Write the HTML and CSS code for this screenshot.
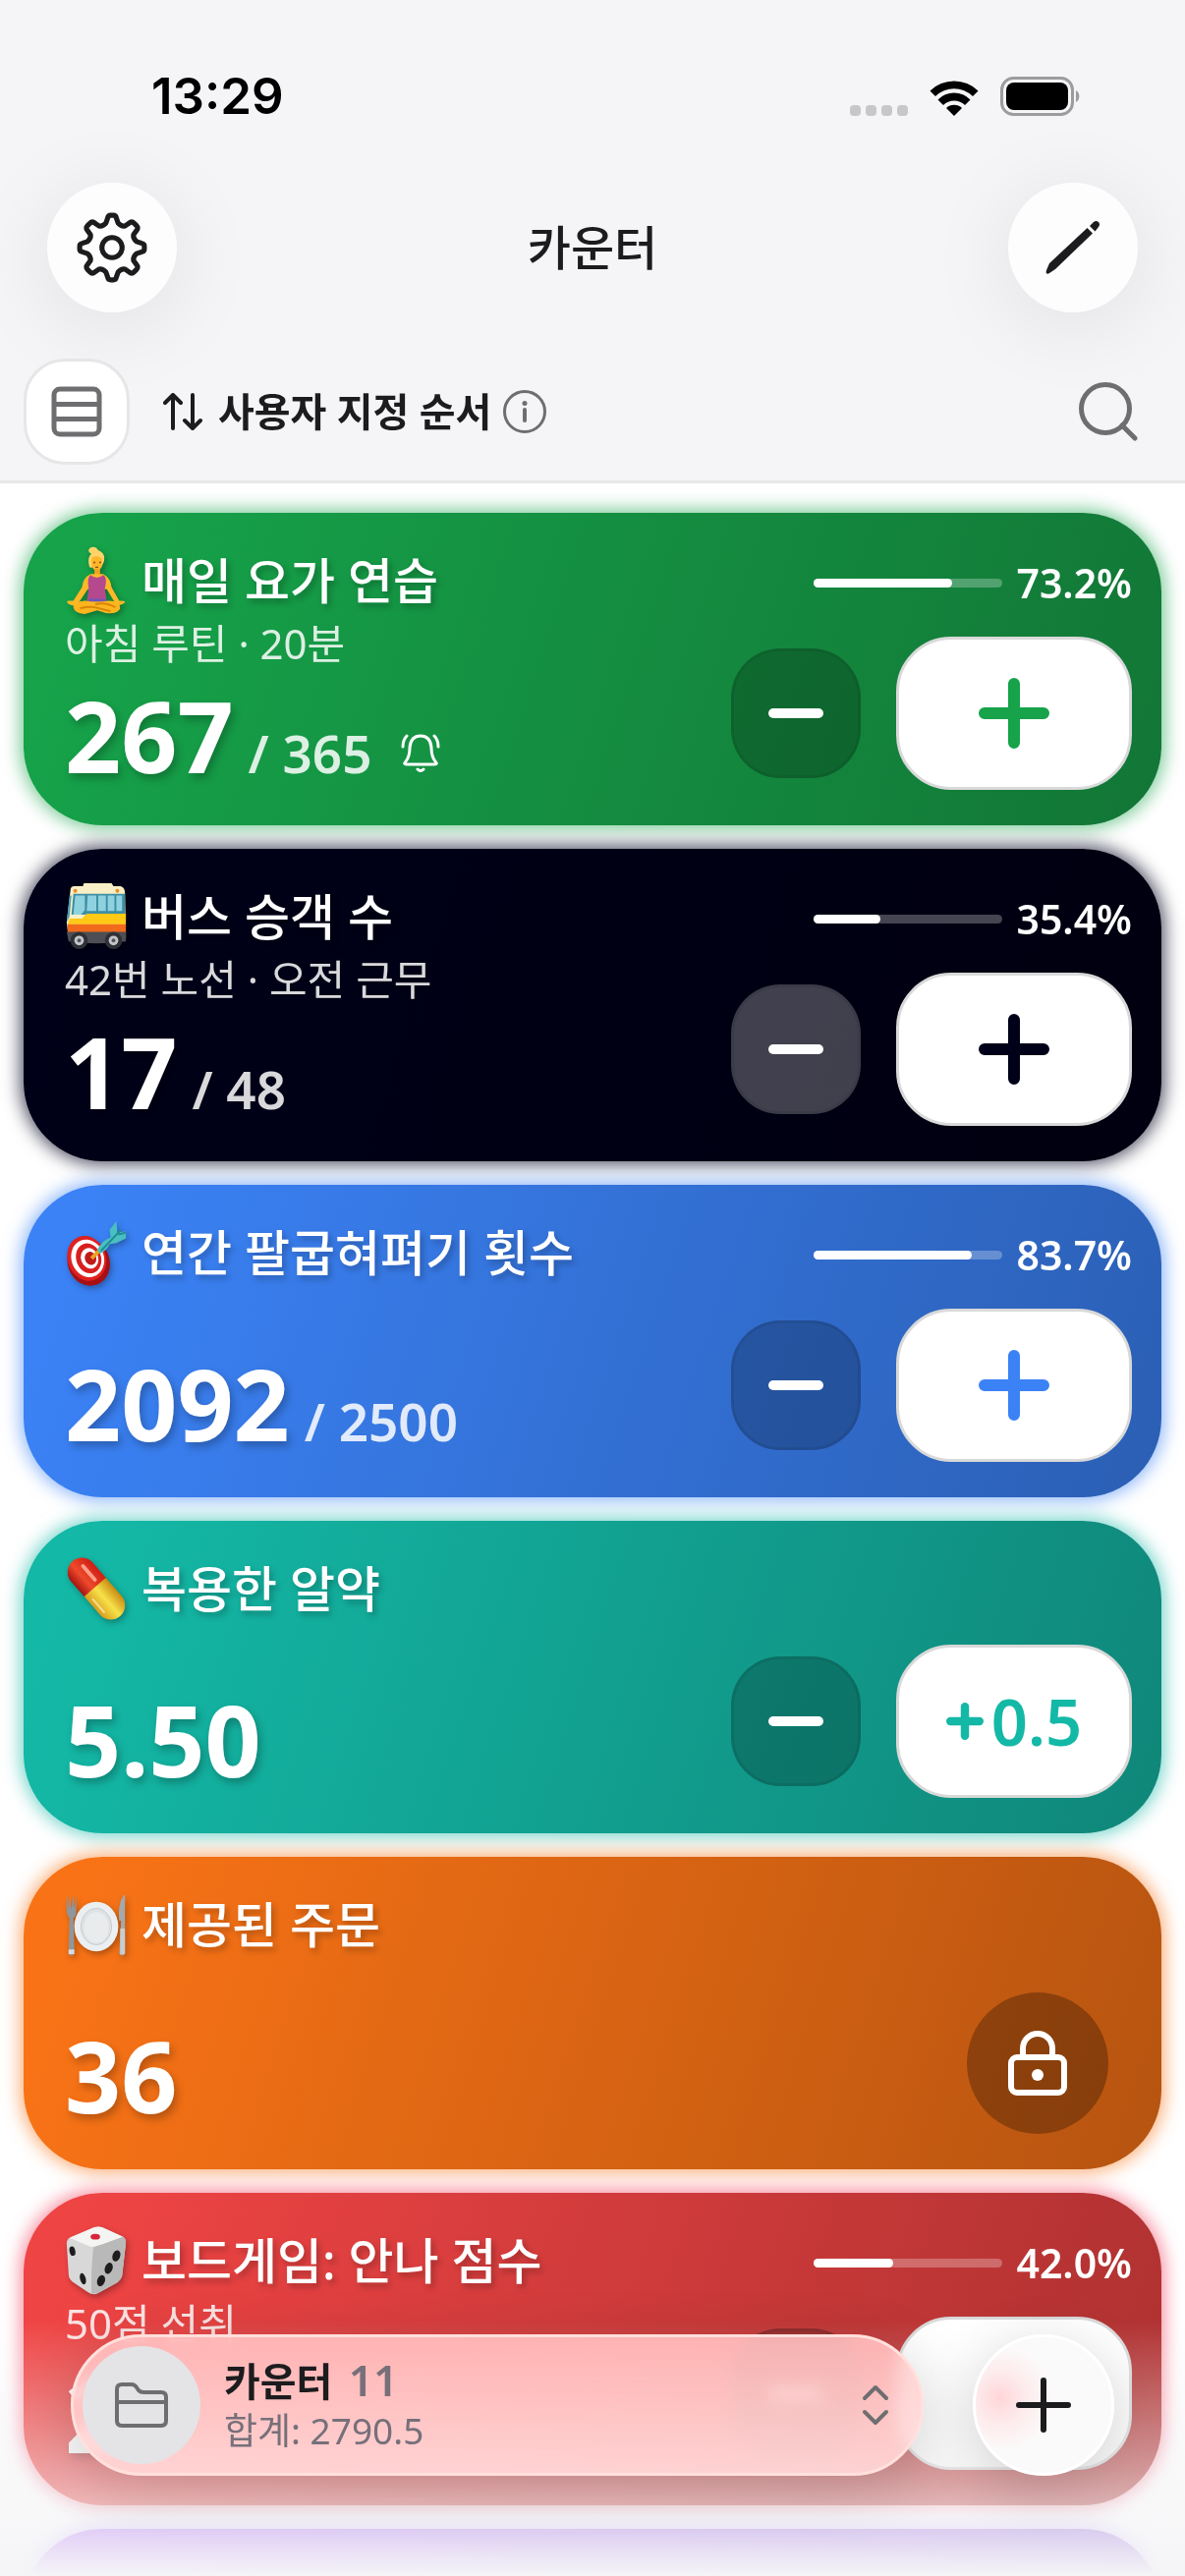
FILE: index.html
```
<!DOCTYPE html>
<html lang="ko">
<head>
    <meta charset="UTF-8">
    <meta name="viewport" content="width=device-width, initial-scale=1.0">
    <title>카운터</title>
    <link rel="stylesheet" href="styles.css">
</head>
<body>
    <div class="app">
        <header class="header">
            <div class="status-bar">
                <span class="clock">13:29</span>
                <div class="status-icons">
                    <svg width="59" height="11" viewBox="0 0 59 11" fill="#c7c7c9"><rect width="11" height="11" rx="4"/><rect x="16" width="11" height="11" rx="4"/><rect x="32" width="11" height="11" rx="4"/><rect x="48" width="11" height="11" rx="4"/></svg>
                    <svg class="wifi" width="50" height="38" viewBox="0 0 50 38"><path d="M25 38 L17 30 A11.500 11.500 0 0 1 33 30 Z"/><path d="M8.500 21.500 A23 23 0 0 1 41.500 21.500 L36 27 A15.500 15.500 0 0 0 14 27 Z"/><path d="M0.500 12.500 A35 35 0 0 1 49.500 12.500 L44 18 A27 27 0 0 0 6 18 Z"/></svg>
                    <svg width="82" height="40" viewBox="0 0 82 40"><rect x="1.500" y="1.500" width="72" height="37" rx="12" fill="none" stroke="#9c9c9e" stroke-width="3"/><rect x="6" y="6" width="63" height="28" rx="8"/><path d="M77 14 a7 7 0 0 1 0 12 z" fill="#9c9c9e"/></svg>
                </div>
            </div>
            <nav class="nav">
                <button class="round-btn" type="button" aria-label="설정">
                    <svg width="74" height="74" viewBox="-36 -36 72 72" fill="none" stroke="#1c1c1e" stroke-width="5" stroke-linejoin="round">
                        <path d="M-6 -24.300 L-4.200 -29.500 Q-3.700 -32 -1.500 -32 H1.500 Q3.700 -32 4.200 -29.500 L6 -24.300 Q9.500 -20.500 12.900 -21.400 L18 -25 Q20 -26 22 -24 L24 -22 Q26 -20 25 -18 L21.400 -12.900 Q20.500 -9.500 24.300 -6 L29.500 -4.200 Q32 -3.700 32 -1.500 V1.500 Q32 3.700 29.500 4.200 L24.300 6 Q20.500 9.500 21.400 12.900 L25 18 Q26 20 24 22 L22 24 Q20 26 18 25 L12.900 21.400 Q9.500 20.500 6 24.300 L4.200 29.500 Q3.700 32 1.500 32 H-1.500 Q-3.700 32 -4.200 29.500 L-6 24.300 Q-9.500 20.500 -12.900 21.400 L-18 25 Q-20 26 -22 24 L-24 22 Q-26 20 -25 18 L-21.400 12.900 Q-20.500 9.500 -24.300 6 L-29.500 4.200 Q-32 3.700 -32 1.500 V-1.500 Q-32 -3.700 -29.500 -4.200 L-24.300 -6 Q-20.500 -9.500 -21.400 -12.900 L-25 -18 Q-26 -20 -24 -22 L-22 -24 Q-20 -26 -18 -25 L-12.900 -21.400 Q-9.500 -20.500 -6 -24.300 Z"/>
                        <circle r="10"/>
                    </svg>
                </button>
                <h1 class="nav-title">카운터</h1>
                <button class="round-btn" type="button" aria-label="편집">
                    <svg width="56" height="56" viewBox="0 0 56 56" fill="#1c1c1e"><path d="M1.500 54.500 Q0 54 1 51 L4 44 L42.500 8 L48 13.500 L10 50 L4 54 Q2.500 55 1.500 54.500 Z"/><path d="M45 6 L49 2 Q51.500 0 54 2 Q56 4.500 54 7 L50.500 11.500 Z"/></svg>
                </button>
            </nav>
            <div class="toolbar">
                <button class="view-btn" type="button" aria-label="목록 보기">
                    <svg width="52" height="52" viewBox="0 0 52 52" fill="none" stroke="#6e6e70" stroke-width="5"><rect x="3" y="3" width="46" height="46" rx="6"/><path d="M3 18.500 H49 M3 33.500 H49"/></svg>
                </button>
                <button class="sort-btn" type="button">
                    <svg width="40" height="38" viewBox="0 0 40 38" fill="none" stroke="#1c1c1e" stroke-width="4" stroke-linecap="round" stroke-linejoin="round"><path d="M10 36 V2 M2 10 L10 2 L18 10 M30 2 V36 M22 28 L30 36 L38 28"/></svg>
                    <span>사용자 지정 순서</span>
                </button>
                <button class="plain-btn" type="button" aria-label="정보">
                    <svg width="44" height="44" viewBox="0 0 44 44" fill="none" stroke="#6e6e70"><circle cx="22" cy="22" r="20.500" stroke-width="3"/><path d="M22 20 V31" stroke-width="4" stroke-linecap="round"/><circle cx="22" cy="13.500" r="2.500" fill="#6e6e70" stroke="none"/></svg>
                </button>
                <button class="plain-btn search-btn" type="button" aria-label="검색">
                    <svg width="60" height="60" viewBox="0 0 60 60" fill="none" stroke="#6e6e70" stroke-width="5"><circle cx="27" cy="27" r="24.500"/><path d="M44 44 L57 57" stroke-linecap="round"/></svg>
                </button>
            </div>
        </header>

        <main class="list">
            <article class="card green">
                <div class="card-info">
                    <h2 class="card-title">
                        <svg class="emoji" viewBox="0 0 64 72">
                            <path d="M25 22 Q22 12 27 8 Q22 6 25 2 Q31 -1 34 4 Q42 7 40 16 L37 23 Z" fill="#ffd36a"/>
                            <path d="M27 12 Q33 8 38 13 V20 Q36 26 32 26 Q27 24 27 18 Z" fill="#fcb62b"/>
                            <path d="M30 24 H36 V32 H30 Z" fill="#f3a01e"/>
                            <path d="M26 29 Q18 33 17 43 L8 57 L2 57 Q0 60 7 62 Q11 63 13 60 L23 45 L43 45 L52 60 Q56 64 62 59 Q63 57 56 57 L48 43 Q47 33 39 29 Z" fill="#fdb827"/>
                            <path d="M26 30 Q33 36 39 30 Q44 32 41 44 L43 59 H22 L24 44 Q22 33 26 30 Z" fill="#b5498f"/>
                            <path d="M25 55 H41 L43 62 H22 Z" fill="#6b58b8"/>
                            <path d="M8 64 Q8 58 20 57 Q33 59 45 57 Q57 57 57 65 Q55 71 42 70 L33 67 L20 71 Q9 70 8 64 Z" fill="#fdb51f"/>
                            <path d="M15 65 Q26 62 35 65 L47 68 M31 61 Q41 58 52 64" fill="none" stroke="#d88608" stroke-width="2"/>
                            <path d="M29 17 h2 M35 17 h2 M31 22 h3" stroke="#8c4a12" stroke-width="1.500"/>
                        </svg>
                        매일 요가 연습
                    </h2>
                    <p class="card-note">아침 루틴 · 20분</p>
                    <div class="card-value">
                        <strong>267</strong><span class="goal">/ 365</span>
                        <svg class="bell" width="40" height="40" viewBox="0 0 40 40" fill="none" stroke="#fff" stroke-width="3" stroke-linecap="round" stroke-linejoin="round"><path d="M5 28 Q9 23 9 14 Q10 2 20 2 Q30 2 31 14 Q31 23 35 28 Q38 31 34 31 H6 Q2 31 5 28 Z"/><path d="M17 36 Q20 39 23 36 M6 2 Q2 6 2 13 M34 2 Q38 6 38 13"/></svg>
                    </div>
                </div>
                <div class="card-side">
                    <div class="progress">
                        <div class="track" role="progressbar" aria-valuenow="73"><div class="fill" style="width: 73.2%"></div></div>
                        <span>73.2%</span>
                    </div>
                    <div class="actions">
                        <button class="minus" type="button" aria-label="빼기"></button>
                        <button class="plus" type="button" aria-label="더하기"><svg width="72" height="72" viewBox="0 0 72 72"><path d="M36 6 V66 M6 36 H66"/></svg></button>
                    </div>
                </div>
            </article>

            <article class="card navy">
                <div class="card-info">
                    <h2 class="card-title">
                        <svg class="emoji" viewBox="0 0 64 72">
                            <path d="M5 8 Q5 4 9 4 H18 L19 1 H48 L50 4 H57 Q62 5 62 11 L63 58 H3 L1 42 Z" fill="#f8efc6"/>
                            <path d="M8 12 H62 V34 H6 Z" fill="#3e8ea3"/>
                            <path d="M10 14 H20 V29 L16 34 H8 Z M23 14 H32 V30 H22 Z M34 14 H42 V30 H34 Z M44 14 H51 V30 H44 Z M53 14 H59 V30 H53 Z" fill="#8fd2df"/>
                            <path d="M4 14 L6 14 L4 36 L1 42 Z" fill="#4f9fb3"/>
                            <path d="M4 38 H17 L22 33 H63 V44 H2 Z" fill="#ffc915"/>
                            <path d="M2 44 H63 V54 H2 Z" fill="#f26a1b"/>
                            <path d="M1 52 H63 V62 Q32 66 3 62 Z" fill="#4d4f55"/>
                            <circle cx="14" cy="61" r="9" fill="#303136"/><circle cx="50" cy="61" r="9" fill="#303136"/>
                            <circle cx="14" cy="61" r="5" fill="#c3c6ca"/><circle cx="50" cy="61" r="5" fill="#c3c6ca"/>
                            <circle cx="14" cy="61" r="2" fill="#555"/><circle cx="50" cy="61" r="2" fill="#555"/>
                            <circle cx="10" cy="9" r="2" fill="#ef8c1d"/><circle cx="54" cy="9" r="2" fill="#ef8c1d"/>
                        </svg>
                        버스 승객 수
                    </h2>
                    <p class="card-note">42번 노선 · 오전 근무</p>
                    <div class="card-value"><strong>17</strong><span class="goal">/ 48</span></div>
                </div>
                <div class="card-side">
                    <div class="progress">
                        <div class="track" role="progressbar" aria-valuenow="35"><div class="fill" style="width: 35.4%"></div></div>
                        <span>35.4%</span>
                    </div>
                    <div class="actions">
                        <button class="minus" type="button" aria-label="빼기"></button>
                        <button class="plus" type="button" aria-label="더하기"><svg width="72" height="72" viewBox="0 0 72 72"><path d="M36 6 V66 M6 36 H66"/></svg></button>
                    </div>
                </div>
            </article>

            <article class="card blue">
                <div class="card-info">
                    <h2 class="card-title">
                        <svg class="emoji" viewBox="0 0 64 72">
                            <ellipse cx="24" cy="46" rx="22" ry="25" fill="#a80f13" transform="rotate(-20 24 46)"/>
                            <ellipse cx="22" cy="42" rx="20" ry="24" fill="#df211f" transform="rotate(-20 22 42)"/>
                            <ellipse cx="23" cy="42" rx="17" ry="20" fill="#fff" transform="rotate(-20 23 42)"/>
                            <ellipse cx="24" cy="42" rx="13" ry="16" fill="#d8201f" transform="rotate(-20 24 42)"/>
                            <ellipse cx="25" cy="42" rx="9" ry="11" fill="#fff" transform="rotate(-20 25 42)"/>
                            <ellipse cx="26" cy="42" rx="6" ry="7" fill="#c01a1a" transform="rotate(-20 26 42)"/>
                            <path d="M27 42 L36 33" stroke="#e7a322" stroke-width="4"/>
                            <path d="M33 33 Q38 23 47 20 L46 12 L53 3 L54 15 L63 14 L63 21 L53 26 L46 27 Q43 34 36 37 Z" fill="#48bfc0"/>
                            <path d="M37 34 L58 12 M55 17 L63 15" stroke="#218a92" stroke-width="2"/>
                        </svg>
                        연간 팔굽혀펴기 횟수
                    </h2>
                    <div class="card-value"><strong>2092</strong><span class="goal">/ 2500</span></div>
                </div>
                <div class="card-side">
                    <div class="progress">
                        <div class="track" role="progressbar" aria-valuenow="84"><div class="fill" style="width: 83.7%"></div></div>
                        <span>83.7%</span>
                    </div>
                    <div class="actions">
                        <button class="minus" type="button" aria-label="빼기"></button>
                        <button class="plus" type="button" aria-label="더하기"><svg width="72" height="72" viewBox="0 0 72 72"><path d="M36 6 V66 M6 36 H66"/></svg></button>
                    </div>
                </div>
            </article>

            <article class="card teal">
                <div class="card-info">
                    <h2 class="card-title">
                        <svg class="emoji" viewBox="0 0 64 72">
                            <defs>
                                <linearGradient id="pillRed" x1="0" x2="1"><stop offset="0" stop-color="#a51510"/><stop offset="0.400" stop-color="#ee4a2c"/><stop offset="1" stop-color="#cf1f14"/></linearGradient>
                                <linearGradient id="pillYellow" x1="0" x2="1"><stop offset="0" stop-color="#d99d1c"/><stop offset="0.500" stop-color="#f7e24a"/><stop offset="1" stop-color="#c98b12"/></linearGradient>
                            </defs>
                            <g transform="rotate(-41 32 36)">
                                <path d="M17 36 V13 A15 15 0 0 1 47 13 V36 Z" fill="url(#pillRed)"/>
                                <path d="M17 34 H47 V59 A15 15 0 0 1 17 59 Z" fill="url(#pillYellow)"/>
                                <path d="M37 9 V28" stroke="#ff9d85" stroke-width="4" stroke-linecap="round"/>
                                <path d="M22 42 V60" stroke="#f5dd90" stroke-width="2" stroke-linecap="round"/>
                            </g>
                        </svg>
                        복용한 알약
                    </h2>
                    <div class="card-value"><strong>5.50</strong></div>
                </div>
                <div class="card-side">
                    <div class="actions">
                        <button class="minus" type="button" aria-label="빼기"></button>
                        <button class="plus step" type="button"><svg width="38" height="38" viewBox="0 0 36 36"><path d="M18 4 V32 M4 18 H32"/></svg>0.5</button>
                    </div>
                </div>
            </article>

            <article class="card orange">
                <div class="card-info">
                    <h2 class="card-title">
                        <svg class="emoji" viewBox="0 0 64 72">
                            <ellipse cx="32" cy="38" rx="23" ry="26" fill="#eceff1"/>
                            <ellipse cx="32" cy="38" rx="16" ry="19" fill="#dfe2e4" stroke="#c5cacd" stroke-width="1"/>
                            <ellipse cx="32" cy="39" rx="13" ry="16" fill="#e9ebec"/>
                            <path d="M1 5 V22 Q2 27 4 29 L3 66 Q6 71 9 66 L8 29 Q11 27 11 22 V5 L9 20 L8 5 L6 20 L4 5 L3 20 Z" fill="#8f979d"/>
                            <path d="M3 62 H9 V67 H3 Z" fill="#d8dcdf"/>
                            <path d="M62 4 Q54 12 56 32 H58 L56 66 Q59 71 62 66 Z" fill="#a3a9ad"/>
                            <path d="M57 40 H62 V67 H57 Z" fill="#c9cdd0"/>
                        </svg>
                        제공된 주문
                    </h2>
                    <div class="card-value"><strong>36</strong></div>
                </div>
                <div class="card-side">
                    <button class="lock" type="button" aria-label="잠김">
                        <svg width="60" height="66" viewBox="0 0 60 66" fill="none" stroke="#fff" stroke-width="6"><rect x="3" y="27" width="54" height="36" rx="6"/><path d="M15 27 V18 A15 15 0 0 1 45 18 V27"/><circle cx="30" cy="45" r="6" fill="#fff" stroke="none"/></svg>
                    </button>
                </div>
            </article>

            <article class="card red">
                <div class="card-info">
                    <h2 class="card-title">
                        <svg class="emoji" viewBox="0 0 64 72">
                            <path d="M4 12 L30 1 Q34 0 38 1 L60 11 Q63 13 63 17 L59 52 Q58 56 54 59 L34 70 Q29 73 23 69 L7 58 Q3 55 3 50 L1 18 Q1 14 4 12 Z" fill="#d8d8d8"/>
                            <path d="M4 12 L30 1 Q34 0 38 1 L60 11 L36 20 Q30 22 25 21 Z" fill="#f4f4f2"/>
                            <path d="M29 22 Q33 20 38 19 L60 11 Q63 13 63 17 L59 52 Q58 56 54 59 L34 70 L27 71 Q26 50 29 22 Z" fill="#b9b9b9"/>
                            <ellipse cx="31" cy="11" rx="5" ry="3" fill="#d7263a"/>
                            <ellipse cx="7" cy="26" rx="3" ry="5" fill="#1d1d1d" transform="rotate(-12 7 26)"/><ellipse cx="18" cy="55" rx="3" ry="6" fill="#1d1d1d" transform="rotate(-15 18 55)"/>
                            <ellipse cx="53" cy="31" rx="4" ry="6" fill="#1d1d1d" transform="rotate(20 53 31)"/><ellipse cx="45" cy="44" rx="4" ry="6" fill="#1d1d1d" transform="rotate(20 45 44)"/><ellipse cx="37" cy="57" rx="4" ry="6" fill="#1d1d1d" transform="rotate(20 37 57)"/>
                        </svg>
                        보드게임: 안나 점수
                    </h2>
                    <p class="card-note">50점 선취</p>
                    <div class="card-value"><strong>21</strong></div>
                </div>
                <div class="card-side">
                    <div class="progress">
                        <div class="track" role="progressbar" aria-valuenow="42"><div class="fill" style="width: 42%"></div></div>
                        <span>42.0%</span>
                    </div>
                    <div class="actions">
                        <button class="minus" type="button" aria-label="빼기"></button>
                        <button class="plus" type="button" aria-label="더하기"></button>
                    </div>
                </div>
            </article>

            <article class="card purple"></article>
        </main>

        <div class="fade"></div>

        <footer class="dock">
            <button class="folder" type="button">
                <span class="folder-icon">
                    <svg width="54" height="54" viewBox="0 0 54 54" fill="none" stroke="#6e6e70" stroke-width="4" stroke-linejoin="round"><path d="M2 43 V11 Q2 6 7 6 H17 Q20 6 22 9 L24 12 Q26 14 29 14 H47 Q52 14 52 19 V43 Q52 48 47 48 H7 Q2 48 2 43 Z M2 24 H52"/></svg>
                </span>
                <span class="folder-text">
                    <span class="folder-name">카운터 <span class="folder-count">11</span></span>
                    <span class="folder-sum">합계: 2790.5</span>
                </span>
                <svg width="28" height="42" viewBox="0 0 28 42" fill="none" stroke="#6e6e70" stroke-width="4" stroke-linecap="round" stroke-linejoin="round"><path d="M3 14 L14 3 L25 14 M3 28 L14 39 L25 28"/></svg>
            </button>
            <button class="fab" type="button" aria-label="카운터 추가">
                <svg width="56" height="56" viewBox="0 0 56 56" fill="none" stroke="#1c1c1e" stroke-width="6" stroke-linecap="round"><path d="M28 3 V53 M3 28 H53"/></svg>
            </button>
        </footer>
    </div>
</body>
</html>
```
FILE: styles.css
```
* {
    box-sizing: border-box;
    margin: 0;
    padding: 0;
}
body {
    font-family: "Noto Sans", "Noto Sans CJK KR", sans-serif;
    background-color: #fff;
    color: #1c1c1e;
}
button {
    font: inherit;
    color: inherit;
    background: none;
    border: none;
    cursor: pointer;
}
svg {
    display: block;
    flex-shrink: 0;
}
.app {
    position: relative;
    height: 100vh;
    overflow: hidden;
}

/* header */
.header {
    background-color: #f5f5f7;
    border-bottom: 3px solid #e8e8ea;
    padding-bottom: 16px;
}
.status-bar {
    display: flex;
    justify-content: space-between;
    align-items: center;
    height: 126px;
    padding: 70px 106px 0 154px;
}
.clock {
    font-family: Inter, sans-serif;
    font-size: 51px;
    font-weight: 600;
    line-height: 56px;
    color: #000;
}
.status-icons {
    display: flex;
    align-items: flex-end;
    gap: 22px;
}
.nav {
    display: flex;
    justify-content: space-between;
    align-items: center;
    margin-top: 60px;
    padding: 0 48px;
}
.round-btn {
    display: flex;
    align-items: center;
    justify-content: center;
    width: 132px;
    height: 132px;
    border-radius: 50%;
    background-color: #fdfdfe;
    box-shadow: 0 12px 90px rgba(0, 0, 0, 0.09);
}
.nav-title {
    font-size: 48px;
    font-weight: 500;
    line-height: 64px;
}
.toolbar {
    display: flex;
    align-items: center;
    margin-top: 47px;
    padding: 0 48px 0 24px;
}
.view-btn {
    display: flex;
    align-items: center;
    justify-content: center;
    width: 108px;
    height: 108px;
    border: 3px solid #e6e6e8;
    border-radius: 42px;
    background-color: #fff;
}
.sort-btn {
    display: flex;
    align-items: center;
    gap: 16px;
    margin: 0 12px 0 34px;
    font-size: 40px;
    font-weight: 600;
    line-height: 52px;
}
.search-btn {
    margin-left: auto;
}

/* counter cards */
.list {
    display: flex;
    flex-direction: column;
    gap: 24px;
    padding: 30px 24px 24px;
}
.card {
    --color: #16a34a;
    --dark: #127636;
    --glow: rgba(22, 163, 74, 0.6);
    display: flex;
    justify-content: space-between;
    flex-shrink: 0;
    min-height: 318px;
    padding: 36px 30px 36px 42px;
    border-radius: 80px;
    color: #fff;
    background: linear-gradient(108deg, var(--color) 5%, var(--dark) 100%);
    box-shadow: 0 0 18px 3px var(--glow);
}
.navy {
    --color: #000018;
    --dark: #000010;
    --glow: rgba(0, 0, 32, 0.7);
}
.blue {
    --color: #3b82f6;
    --dark: #2b5fb4;
    --glow: rgba(59, 130, 246, 0.6);
}
.teal {
    --color: #14b8a6;
    --dark: #0f8779;
    --glow: rgba(20, 184, 166, 0.6);
}
.orange {
    --color: #f97316;
    --dark: #b65410;
    --glow: rgba(249, 115, 22, 0.6);
}
.red {
    --color: #ef4444;
    --dark: #ae3131;
    --glow: rgba(244, 63, 94, 0.6);
}
.purple {
    --color: #a855f7;
    --dark: #7c4fd0;
    --glow: rgba(139, 92, 246, 0.5);
}
.card-info {
    display: flex;
    flex-direction: column;
}
.card-title {
    display: flex;
    align-items: center;
    gap: 14px;
    height: 66px;
    font-size: 50px;
    font-weight: 500;
    line-height: 64px;
    text-shadow: 3px 4px 6px rgba(0, 0, 0, 0.25);
}
.emoji {
    width: 64px;
    height: 70px;
    filter: drop-shadow(2px 3px 3px rgba(0, 0, 0, 0.3));
}
.card-note {
    font-size: 42px;
    line-height: 62px;
    opacity: 0.85;
}
.card-value {
    display: flex;
    align-items: baseline;
    margin-top: auto;
    margin-bottom: 4px;
    line-height: 60px;
}
.card-note + .card-value {
    margin-bottom: 0;
}
.card-value strong {
    font-size: 100px;
    font-weight: 700;
    line-height: 112px;
    text-shadow: 3px 5px 8px rgba(0, 0, 0, 0.25);
}
.goal {
    margin-left: 15px;
    font-size: 53px;
    font-weight: 600;
    color: rgba(255, 255, 255, 0.85);
}
.bell {
    margin-left: 30px;
}
.card-side {
    display: flex;
    flex-direction: column;
    align-items: flex-end;
    justify-content: space-between;
}
.progress {
    display: flex;
    align-items: center;
    gap: 14px;
    font-size: 41px;
    font-weight: 600;
    line-height: 70px;
}
.track {
    width: 192px;
    height: 9px;
    border-radius: 5px;
    background-color: rgba(255, 255, 255, 0.27);
}
.fill {
    height: 100%;
    border-radius: 5px;
    background-color: #fff;
}
.actions {
    display: flex;
    align-items: center;
    gap: 36px;
    margin-top: auto;
}
.minus {
    display: flex;
    align-items: center;
    justify-content: center;
    width: 132px;
    height: 132px;
    border: 3px solid rgba(0, 0, 0, 0.08);
    border-radius: 50px;
    background-color: rgba(0, 0, 0, 0.22);
}
.minus::before {
    content: "";
    width: 56px;
    height: 10px;
    border-radius: 5px;
    background-color: #fff;
}
.navy .minus {
    background-color: rgba(255, 255, 255, 0.25);
}
.plus {
    display: flex;
    align-items: center;
    justify-content: center;
    width: 240px;
    height: 156px;
    border: 3px solid #d9d9d9;
    border-radius: 56px;
    background-color: #fff;
    color: var(--color);
}
.plus svg {
    fill: none;
    stroke: var(--color);
    stroke-width: 12;
    stroke-linecap: round;
}
.plus.step {
    gap: 8px;
    font-size: 65px;
    font-weight: 600;
}
.plus.step svg {
    stroke-width: 8;
}
.lock {
    display: flex;
    align-items: center;
    justify-content: center;
    width: 144px;
    height: 144px;
    margin: auto 24px 0 0;
    border-radius: 50%;
    background-color: rgba(0, 0, 0, 0.27);
}

/* bottom dock */
.fade {
    position: absolute;
    left: 0;
    right: 0;
    bottom: 0;
    height: 260px;
    background: linear-gradient(rgba(245, 245, 247, 0), rgba(243, 243, 245, 0.55) 60%, rgba(245, 245, 247, 0.76) 82%, #f5f5f7);
}
.dock {
    position: absolute;
    left: 72px;
    right: 72px;
    bottom: 102px;
    display: flex;
    gap: 50px;
}
.folder {
    display: flex;
    flex: 1;
    align-items: center;
    height: 144px;
    padding: 0 32px 0 9px;
    border: 3px solid #ffe0dc;
    border-radius: 72px;
    text-align: left;
    background: linear-gradient(rgba(255, 200, 200, 0.85), rgba(255, 220, 220, 0.85));
    backdrop-filter: blur(8px) saturate(140%);
    box-shadow: 0 12px 60px rgba(0, 0, 0, 0.16);
}
.folder-icon {
    display: flex;
    align-items: center;
    justify-content: center;
    width: 120px;
    height: 120px;
    border-radius: 50%;
    background-color: #e4e4e7;
}
.folder-text {
    display: flex;
    flex: 1;
    flex-direction: column;
    margin-left: 24px;
}
.folder-name {
    font-size: 40px;
    font-weight: 700;
    line-height: 50px;
}
.folder-count {
    margin-left: 6px;
    font-size: 44px;
    font-weight: 600;
    color: #77707a;
}
.folder-sum {
    font-size: 37px;
    line-height: 50px;
    color: #77707a;
}
.fab {
    display: flex;
    align-items: center;
    justify-content: center;
    width: 144px;
    height: 144px;
    border: 3px solid #fff;
    border-radius: 50%;
    background: radial-gradient(circle at 18% 45%, #ffd6d8 0%, #fdeced 20%, #fbfafa 40%);
    box-shadow: 0 12px 60px rgba(0, 0, 0, 0.16);
}
```
